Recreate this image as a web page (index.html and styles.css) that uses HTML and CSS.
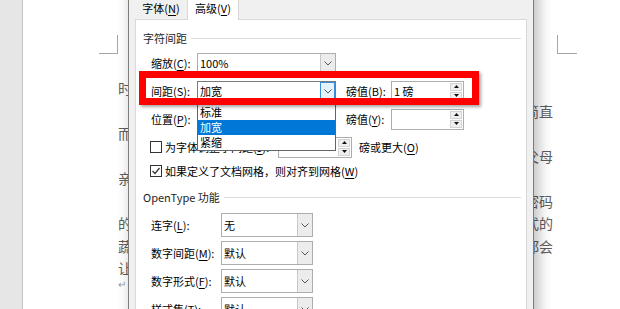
FILE: index.html
```html
<!DOCTYPE html>
<html lang="zh-CN">
<head>
    <meta charset="UTF-8">
    <title>字体 - 高级</title>
    <link rel="stylesheet" href="styles.css">
</head>
<body>
    <div class="page">
        <div class="text-area">
            <p class="plain">时光荏苒，转眼间又到了一年的秋天。</p>
            <p>记得小时候，每到周末，外婆总会做一桌丰盛的饭菜，那味道简直而我最喜欢的，就是她亲手包的饺子。</p>
            <p>后来我离开家乡去外地读书，每逢假期回家，最想念的人就是父母亲手做的那一碗热汤面。</p>
            <p>如今回想起来，那些看似平常的家常菜，其实就是开启幸福的密码的钥匙。记忆中，外婆家的后院有一块小小的菜园，里面种满了各式的蔬菜和瓜果，春天有韭菜，夏天有黄瓜，每到收获的季节，外婆她都会让我把新鲜的蔬菜送给左邻右舍。</p>
            <p class="plain mark">↵</p>
        </div>
    </div>

    <div class="dialog">
        <div class="tabs">
            <div class="tab">字体(<u>N</u>)</div>
            <div class="tab active">高级(<u>V</u>)</div>
        </div>
        <div class="panel">
            <div class="group-title"><span>字符间距</span><i class="rule"></i></div>

            <div class="row first">
                <label class="lbl">缩放(<u>C</u>):</label>
                <div class="combo">
                    <span class="value">100%</span>
                    <span class="drop"><svg width="8" height="5" viewBox="0 0 8 5"><path d="M0.5 0.5 L4 4 L7.5 0.5" /></svg></span>
                </div>
            </div>

            <div class="row">
                <label class="lbl">间距(<u>S</u>):</label>
                <div class="combo hot">
                    <span class="value">加宽</span>
                    <span class="drop"><svg width="8" height="5" viewBox="0 0 8 5"><path d="M0.5 0.5 L4 4 L7.5 0.5" /></svg></span>
                    <ul class="list">
                        <li>标准</li>
                        <li class="selected">加宽</li>
                        <li>紧缩</li>
                    </ul>
                </div>
                <label class="lbl2">磅值(<u>B</u>):</label>
                <div class="spin">
                    <span class="value">1 磅</span>
                    <span class="btns">
                        <b><svg width="5" height="3" viewBox="0 0 5 3"><path d="M0 3 L2.5 0 L5 3 Z" /></svg></b>
                        <b><svg width="5" height="3" viewBox="0 0 5 3"><path d="M0 0 L2.5 3 L5 0 Z" /></svg></b>
                    </span>
                </div>
            </div>

            <div class="row">
                <label class="lbl">位置(<u>P</u>):</label>
                <div class="combo">
                    <span class="value">标准</span>
                    <span class="drop"><svg width="8" height="5" viewBox="0 0 8 5"><path d="M0.5 0.5 L4 4 L7.5 0.5" /></svg></span>
                </div>
                <label class="lbl2">磅值(<u>Y</u>):</label>
                <div class="spin">
                    <span class="value"></span>
                    <span class="btns">
                        <b><svg width="5" height="3" viewBox="0 0 5 3"><path d="M0 3 L2.5 0 L5 3 Z" /></svg></b>
                        <b><svg width="5" height="3" viewBox="0 0 5 3"><path d="M0 0 L2.5 3 L5 0 Z" /></svg></b>
                    </span>
                </div>
            </div>

            <div class="check-row first">
                <span class="box"></span>
                <label class="check-label">为字体调整字间距(<u>J</u>):</label>
                <div class="spin small">
                    <span class="value"></span>
                    <span class="btns">
                        <b><svg width="5" height="3" viewBox="0 0 5 3"><path d="M0 3 L2.5 0 L5 3 Z" /></svg></b>
                        <b><svg width="5" height="3" viewBox="0 0 5 3"><path d="M0 0 L2.5 3 L5 0 Z" /></svg></b>
                    </span>
                </div>
                <span class="after">磅或更大(<u>O</u>)</span>
            </div>

            <div class="check-row">
                <span class="box"><svg width="10" height="10" viewBox="0 0 10 10"><path d="M1.5 5 L4 7.5 L8.5 2" /></svg></span>
                <label>如果定义了文档网格，则对齐到网格(<u>W</u>)</label>
            </div>

            <div class="group-title second"><span>OpenType 功能</span><i class="rule"></i></div>

            <div class="row tall first">
                <label class="lbl wide">连字(<u>L</u>):</label>
                <div class="combo narrow">
                    <span class="value">无</span>
                    <span class="drop"><svg width="8" height="5" viewBox="0 0 8 5"><path d="M0.5 0.5 L4 4 L7.5 0.5" /></svg></span>
                </div>
            </div>
            <div class="row tall">
                <label class="lbl wide">数字间距(<u>M</u>):</label>
                <div class="combo narrow">
                    <span class="value">默认</span>
                    <span class="drop"><svg width="8" height="5" viewBox="0 0 8 5"><path d="M0.5 0.5 L4 4 L7.5 0.5" /></svg></span>
                </div>
            </div>
            <div class="row tall">
                <label class="lbl wide">数字形式(<u>F</u>):</label>
                <div class="combo narrow">
                    <span class="value">默认</span>
                    <span class="drop"><svg width="8" height="5" viewBox="0 0 8 5"><path d="M0.5 0.5 L4 4 L7.5 0.5" /></svg></span>
                </div>
            </div>
            <div class="row tall">
                <label class="lbl wide">样式集(<u>T</u>):</label>
                <div class="combo narrow">
                    <span class="value">默认</span>
                    <span class="drop"><svg width="8" height="5" viewBox="0 0 8 5"><path d="M0.5 0.5 L4 4 L7.5 0.5" /></svg></span>
                </div>
            </div>
        </div>
    </div>

    <div class="highlight"></div>
</body>
</html>
```

FILE: styles.css
```css
body {
    margin: 0;
    width: 620px;
    height: 309px;
    overflow: hidden;
    position: relative;
    background: #e6e6e6;
    font-family: "Noto Sans CJK SC", "Noto Sans", sans-serif;
}

/* document page behind the dialog */
.page {
    margin-left: 22px;
    height: 309px;
    box-sizing: border-box;
    background: #fff;
    border-left: 1px solid #c6c6c6;
    padding: 53px 0 0 94px;
}
.text-area {
    position: relative;
    width: 440px;
    padding: 24px 0 0 1px;
    box-sizing: border-box;
}
.text-area::before,
.text-area::after {
    content: "";
    position: absolute;
    top: -18px;
    height: 18px;
    border-bottom: 1px solid #a6a6a6;
}
.text-area::before {
    left: -18px;
    width: 18px;
    border-right: 1px solid #a6a6a6;
}
.text-area::after {
    left: 440px;
    width: 19px;
    border-left: 1px solid #a6a6a6;
}
.text-area p {
    margin: 0;
    width: 435px;
    font-size: 14px;
    line-height: 22.5px;
    text-align: justify;
    text-indent: 2em;
    color: #5e5e5e;
}
.text-area p.plain {
    text-indent: 0;
}
.text-area p.mark {
    font-size: 10px;
    line-height: 8px;
    color: #999;
}

/* font dialog */
.dialog {
    position: absolute;
    left: 128px;
    top: -12px;
    width: 406px;
    height: 340px;
    box-sizing: border-box;
    background: #f0f0f0;
    border: 1px solid #7d7d7d;
    box-shadow: 4px 0 14px rgba(0, 0, 0, 0.28);
    font-size: 11px;
    color: #000;
}
.dialog u {
    text-decoration-thickness: 1px;
    text-underline-offset: 2px;
}
.tabs {
    display: flex;
    align-items: flex-end;
    height: 30px;
    padding-left: 6px;
}
.tab {
    width: 52px;
    height: 26px;
    box-sizing: border-box;
    padding-top: 7px;
    line-height: 16px;
    text-align: center;
}
.tab.active {
    position: relative;
    z-index: 1;
    height: 31px;
    padding-top: 10px;
    margin-bottom: -1px;
    background: #fff;
    border: 1px solid #d9d9d9;
    border-bottom: none;
}
.panel {
    margin: 0 6px;
    height: 300px;
    box-sizing: border-box;
    padding: 10px 0 0 7px;
    background: #fff;
    border: 1px solid #d9d9d9;
}
.group-title {
    display: flex;
    align-items: center;
    gap: 4px;
    height: 16px;
    line-height: 16px;
    margin-right: 5px;
    color: #1e1e1e;
}
.group-title.second {
    margin-top: 7px;
}
.group-title .rule {
    flex: 1;
    height: 1px;
    background: #dcdcdc;
}

.row {
    display: flex;
    align-items: center;
    height: 22px;
    margin-top: 6px;
    padding-left: 8px;
}
.row.tall {
    height: 24px;
    margin-top: 4px;
}
.row.tall.first {
    margin-top: 8px;
}
.lbl {
    width: 46px;
    line-height: 16px;
}
.lbl.wide {
    width: 70px;
}
.lbl2 {
    width: 45px;
    margin-left: 10px;
    line-height: 16px;
}

.combo {
    position: relative;
    display: flex;
    width: 139px;
    height: 21px;
    box-sizing: border-box;
    border: 1px solid #adadad;
    background: #fff;
}
.combo.narrow {
    width: 92px;
    height: 24px;
}
.combo .value {
    flex: 1;
    padding-left: 2px;
    line-height: 19px;
}
.combo.narrow .value {
    line-height: 22px;
}
.combo .drop {
    width: 15px;
    box-sizing: border-box;
    display: flex;
    align-items: center;
    justify-content: center;
    border-left: 1px solid #c8c8c8;
    background: #ececec;
}
.combo .drop path {
    fill: none;
    stroke: #555;
    stroke-width: 1;
}
.combo.hot {
    border-color: #7a7a7a;
}
.combo.hot .drop {
    border: 1px solid #3c8ed6;
    background: #e5f1fb;
}

.list {
    position: absolute;
    z-index: 2;
    left: -1px;
    top: 20px;
    width: 139px;
    box-sizing: border-box;
    margin: 0;
    padding: 2px 0 0;
    list-style: none;
    background: #fff;
    border: 1px solid #646464;
}
.list li {
    height: 15px;
    line-height: 15px;
    padding-left: 2px;
}
.list li.selected {
    background: #0078d7;
    color: #fff;
}

.spin {
    display: flex;
    width: 73px;
    height: 21px;
    box-sizing: border-box;
    border: 1px solid #adadad;
    background: #fff;
}
.spin.small {
    width: 74px;
}
.spin .value {
    flex: 1;
    padding-left: 2px;
    line-height: 19px;
}
.spin .btns {
    display: flex;
    flex-direction: column;
    gap: 1px;
    width: 14px;
    padding: 1px;
    box-sizing: border-box;
}
.spin .btns b {
    flex: 1;
    display: flex;
    align-items: center;
    justify-content: center;
    background: #efefef;
    border: 1px solid #d4d4d4;
}
.spin .btns path {
    fill: #111;
}

.check-row {
    display: flex;
    align-items: center;
    height: 22px;
    margin-top: 2px;
    padding-left: 7px;
    line-height: 16px;
}
.check-row.first {
    margin-top: 6px;
}
.box {
    width: 12px;
    height: 12px;
    box-sizing: border-box;
    margin-right: 3px;
    display: flex;
    align-items: center;
    justify-content: center;
    border: 1px solid #333;
    background: #fff;
}
.box path {
    fill: none;
    stroke: #333;
    stroke-width: 1.2;
}
.check-label {
    width: 113px;
}
.after {
    margin-left: 7px;
}

/* red annotation frame drawn over the screenshot */
.highlight {
    position: absolute;
    z-index: 5;
    left: 139px;
    top: 71px;
    width: 340px;
    height: 34px;
    box-sizing: border-box;
    border: 7px solid #ff0000;
    box-shadow: 2px 2px 3px rgba(0, 0, 0, 0.35);
}
```
